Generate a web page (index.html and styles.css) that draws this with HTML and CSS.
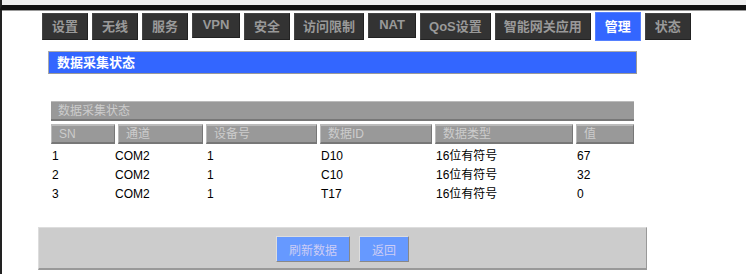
FILE: index.html
```html
<!DOCTYPE html>
<html lang="zh-CN">
<head>
    <meta charset="UTF-8">
    <meta name="viewport" content="width=device-width, initial-scale=1.0">
    <title>数据采集状态</title>
    <link rel="stylesheet" href="styles.css">
</head>
<body>
    <div class="top-frame"></div>
    <div class="page">
        <ul class="tabs">
            <li class="tab">设置</li>
            <li class="tab">无线</li>
            <li class="tab">服务</li>
            <li class="tab short">VPN</li>
            <li class="tab">安全</li>
            <li class="tab">访问限制</li>
            <li class="tab short">NAT</li>
            <li class="tab">QoS设置</li>
            <li class="tab">智能网关应用</li>
            <li class="tab active">管理</li>
            <li class="tab">状态</li>
        </ul>

        <div class="section-title">数据采集状态</div>

        <div class="data-block">
            <div class="caption">数据采集状态</div>
            <table class="data-table">
                <thead>
                    <tr>
                        <th class="col-sn">SN</th>
                        <th class="col-port">通道</th>
                        <th class="col-dev">设备号</th>
                        <th class="col-id">数据ID</th>
                        <th class="col-type">数据类型</th>
                        <th class="col-val">值</th>
                    </tr>
                </thead>
                <tbody>
                    <tr>
                        <td>1</td><td class="port">COM2</td><td>1</td><td>D10</td><td>16位有符号</td><td>67</td>
                    </tr>
                    <tr>
                        <td>2</td><td class="port">COM2</td><td>1</td><td>C10</td><td>16位有符号</td><td>32</td>
                    </tr>
                    <tr>
                        <td>3</td><td class="port">COM2</td><td>1</td><td>T17</td><td>16位有符号</td><td>0</td>
                    </tr>
                </tbody>
            </table>
        </div>

        <div class="actions">
            <button type="button" class="btn">刷新数据</button>
            <button type="button" class="btn">返回</button>
        </div>
    </div>
</body>
</html>
```

FILE: styles.css
```css
body {
    margin: 0;
    background-color: white;
    font-family: "Liberation Sans", "Noto Sans CJK SC", sans-serif;
    font-size: 12px;
    color: #000;
}
.top-frame {
    height: 5px;
    background-color: #eeeeee;
    border-left: 2px solid #222;
    border-bottom: 5px solid #111;
    box-shadow: 0 1px 0 #999;
}
.page {
    border-left: 2px solid #222;
    height: 264px;
    padding-top: 1px;
    box-sizing: border-box;
}
.tabs {
    list-style: none;
    display: flex;
    align-items: flex-start;
    gap: 4px;
    margin: 2px 0 0 40px;
    padding: 0;
}
.tab {
    box-sizing: border-box;
    min-width: 46px;
    height: 27px;
    line-height: 25px;
    padding: 0 8px;
    text-align: center;
    font-size: 13px;
    font-weight: bold;
    color: #999;
    background-color: #333;
    border: 1px solid #444;
    border-right-color: #222;
    border-bottom-color: #222;
}
.tab.short {
    height: 25px;
    line-height: 22px;
    min-width: 48px;
}
.tab.active {
    height: 29px;
    line-height: 27px;
    margin-top: -1px;
    color: white;
    background-color: #3366ff;
    border-color: #5580ff;
}
.section-title {
    box-sizing: border-box;
    width: 589px;
    height: 23px;
    margin: 10px 0 0 46px;
    padding-left: 8px;
    line-height: 21px;
    font-size: 13px;
    font-weight: bold;
    color: white;
    background-color: #3366ff;
    border: 1px solid #aaa;
    border-right-color: #999;
    border-bottom-color: #999;
}
.data-block {
    width: 583px;
    margin: 27px 0 0 49px;
}
.caption {
    box-sizing: border-box;
    height: 20px;
    margin-bottom: 3px;
    padding-left: 7px;
    line-height: 18px;
    color: #ccc;
    background-color: #999;
    border-top: 1px solid #bbb;
    border-bottom: 2px solid #777;
}
.data-table {
    width: 589px;
    margin: 0 -3px;
    border-collapse: separate;
    border-spacing: 3px 0;
    table-layout: fixed;
}
.data-table th {
    box-sizing: border-box;
    height: 20px;
    padding: 0 0 0 7px;
    text-align: left;
    font-weight: normal;
    color: #ccc;
    background-color: #999;
    border-top: 2px solid #bbb;
    border-left: 1px solid #bbb;
    border-right: 1px solid #777;
    border-bottom: 2px solid #777;
    line-height: 16px;
}
.data-table td {
    height: 19px;
    padding: 0 0 0 1px;
    line-height: 19px;
    white-space: nowrap;
}
.data-table tbody tr:first-child td {
    padding-top: 3px;
}
.data-table td.port {
    text-indent: -4px;
}
.col-sn { width: 64px; }
.col-port { width: 85px; }
.col-dev { width: 111px; }
.col-id { width: 112px; }
.col-type { width: 138px; }
.col-val { width: 58px; }
.actions {
    box-sizing: border-box;
    width: 609px;
    height: 43px;
    margin: 23px 0 0 36px;
    padding-top: 8px;
    display: flex;
    justify-content: center;
    align-items: flex-start;
    gap: 9px;
    background-color: #ccc;
    border-top: 1px solid #ddd;
    border-left: 1px solid #ddd;
    border-right: 1px solid #999;
    border-bottom: 2px solid #999;
}
.btn {
    box-sizing: border-box;
    height: 26px;
    padding: 0 12px;
    font-family: inherit;
    font-size: 12px;
    color: #ccccf5;
    background-color: #6699ff;
    border: 1px solid #ddd;
    border-right-color: #888;
    border-bottom-color: #888;
    cursor: pointer;
}
```
